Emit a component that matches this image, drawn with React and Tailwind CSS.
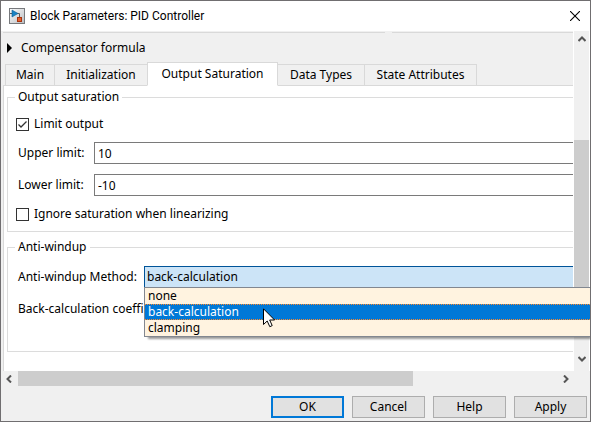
import React from "react";

const tabs = [
  { label: "Main", width: "w-[50px]" },
  { label: "Initialization", width: "w-[92px]" },
  { label: "Output Saturation", width: "w-[131px]", active: true },
  { label: "Data Types", width: "w-[87px]" },
  { label: "State Attributes", width: "w-[112px]" },
];

const methods = ["none", "back-calculation", "clamping"];

function AppIcon() {
  return (
    <svg width="16" height="16" viewBox="0 0 16 16" className="shrink-0" aria-hidden="true">
      <defs>
        <linearGradient id="face" x1="0" y1="0" x2="1" y2="1">
          <stop offset="0" stopColor="#ffffff" />
          <stop offset="1" stopColor="#b9bcc0" />
        </linearGradient>
      </defs>
      <rect x="0.5" y="0.5" width="15" height="15" fill="url(#face)" stroke="#77797c" />
      <path d="M1 5.5H3M8 5.5H10.5V9" fill="none" stroke="#5c5c5c" />
      <path d="M3 2L9 5.5L3 9Z" fill="#1a83c4" stroke="#0f5f96" strokeWidth="0.6" />
      <rect x="8.5" y="9.5" width="4" height="4" fill="#e8602c" stroke="#a8330d" />
    </svg>
  );
}

function Chevron({ d, label }) {
  return (
    <button type="button" aria-label={label} className="flex size-4 shrink-0 items-center justify-center">
      <svg width="8" height="8" viewBox="0 0 8 8" fill="none" stroke="#555555" strokeWidth="2">
        <path d={d} />
      </svg>
    </button>
  );
}

function Check({ id, label, checked }) {
  return (
    <div className="flex h-5 items-center gap-[5px] pl-2">
      <span className="grid size-[13px] shrink-0">
        <input
          id={id}
          type="checkbox"
          defaultChecked={checked}
          className="peer col-start-1 row-start-1 size-[13px] appearance-none border border-[#333333] bg-white"
        />
        <svg
          viewBox="0 0 13 13"
          className="pointer-events-none col-start-1 row-start-1 size-[13px] opacity-0 peer-checked:opacity-100"
          fill="none"
          stroke="#333333"
          strokeWidth="1.3"
        >
          <path d="M2.5 6.5L5 9L10.5 3.5" />
        </svg>
      </span>
      <label htmlFor={id}>{label}</label>
    </div>
  );
}

function Field({ id, label, value }) {
  return (
    <div className="flex h-[22px] items-center pl-[10px]">
      <label htmlFor={id} className="w-[76px] shrink-0">{label}</label>
      <input
        id={id}
        defaultValue={value}
        className="h-[22px] min-w-0 flex-1 border border-r-0 border-[#7a7a7a] bg-white px-[3px]"
      />
    </div>
  );
}

function DialogButton({ children, primary }) {
  return (
    <button
      type="button"
      className={
        primary
          ? "h-[22px] w-[73px] border-2 border-[#0078d7] bg-[#e1e1e1]"
          : "h-[22px] w-[73px] border border-[#adadad] bg-[#e1e1e1]"
      }
    >
      {children}
    </button>
  );
}

export default function App() {
  return (
    <div className="flex min-h-screen flex-col overflow-hidden border border-[#706e70] bg-[#f0f0f0] font-['Noto_Sans',sans-serif] text-[12px] leading-4 text-black">
      <header className="flex h-[30px] items-center bg-white pr-[10px] pl-2">
        <AppIcon />
        <h1 className="flex-1 pl-[5px] font-[Roboto,sans-serif] text-[12px]">Block Parameters: PID Controller</h1>
        <button type="button" aria-label="Close">
          <svg width="10" height="10" viewBox="0 0 10 10" stroke="#000000" strokeWidth="1.1">
            <path d="M0 0L10 10M10 0L0 10" />
          </svg>
        </button>
      </header>

      <div className="flex">
        <main className="min-w-0 flex-1 border-r border-white pl-[2px]">
          <div className="flex h-[2px] items-end gap-[7px]">
            <div className="h-px w-[382px] bg-[#d9d9d9]" />
            <div className="h-px flex-1 bg-[#d9d9d9]" />
          </div>
          <button type="button" className="flex h-[29px] items-center gap-[9px] pl-1">
            <svg width="5" height="10" viewBox="0 0 5 10"><path d="M0 0L5 5L0 10Z" /></svg>
            Compensator formula
          </button>

          <div role="tablist" className="flex h-6 items-end border-b border-[#d9d9d9] pl-[2px]">
            {tabs.map((t, i) => (
              <button
                key={t.label}
                type="button"
                role="tab"
                aria-selected={Boolean(t.active)}
                className={
                  (t.active
                    ? "relative -mb-px h-6 border bg-white "
                    : "h-[21px] border-t border-r bg-[#f0f0f0] ") +
                  (i === 0 ? "border-l " : i === 1 ? "border-r-0 " : "") +
                  "shrink-0 whitespace-nowrap border-[#d9d9d9] border-b-white " +
                  t.width
                }
              >
                {t.label}
              </button>
            ))}
          </div>

          <div className="h-[285px] border-l border-[#d9d9d9] bg-white pt-[3px] pl-[3px]">
            <fieldset className="border border-r-0 border-[#dcdcdc] pb-[7px]">
              <legend className="ml-[7px] px-[3px]">Output saturation</legend>
              <div className="flex flex-col pt-[9px]">
                <Check id="limit" label="Limit output" checked />
                <div className="flex flex-col gap-[10px] pt-2 pb-2">
                  <Field id="upper" label="Upper limit:" value="10" />
                  <Field id="lower" label="Lower limit:" value="-10" />
                </div>
                <Check id="ignore" label="Ignore saturation when linearizing" />
              </div>
            </fieldset>

            <fieldset className="mt-[7px] min-w-0 border border-r-0 border-[#dcdcdc]">
              <legend className="ml-[7px] px-[3px]">Anti-windup</legend>
              <div className="flex flex-col gap-[10px] pt-[11px] pb-[31px]">
                <div className="relative flex h-[22px] items-center pl-[10px]">
                  <label htmlFor="method" className="w-[126px] shrink-0 whitespace-nowrap">Anti-windup Method:</label>
                  <select
                    id="method"
                    defaultValue="back-calculation"
                    className="h-[22px] min-w-0 flex-1 appearance-none border border-r-0 border-[#005499] bg-[#cce4f7] px-[2px]"
                  >
                    {methods.map((m) => (
                      <option key={m}>{m}</option>
                    ))}
                  </select>
                  <ul
                    role="listbox"
                    aria-label="Anti-windup Method"
                    className="absolute top-[21px] -right-5 left-[136px] z-10 border border-[#828790] bg-[#fff3e0] shadow-[4px_2px_2px_rgba(0,0,0,0.4)]"
                  >
                    {methods.map((m) => (
                      <li
                        key={m}
                        role="option"
                        aria-selected={m === "back-calculation"}
                        className={
                          m === "back-calculation"
                            ? "h-4 border-y border-dotted border-[#ff8728] bg-[#0078d7] pl-[3px] leading-[14px] text-white"
                            : "h-4 pl-[3px]"
                        }
                      >
                        {m}
                      </li>
                    ))}
                  </ul>
                  <svg className="absolute top-[42px] left-[255px] z-20" width="13" height="20" viewBox="0 0 13 20" aria-hidden="true">
                    <path d="M0.5 0.8V16.5L4.2 13L6.8 18.7L9.2 17.6L6.7 12H11.6Z" fill="#ffffff" stroke="#000000" strokeWidth="1" />
                  </svg>
                </div>
                <div className="flex h-[22px] items-center pl-[10px] whitespace-nowrap">
                  Back-calculation coeffi
                </div>
              </div>
            </fieldset>
          </div>
        </main>

        <div className="flex w-4 shrink-0 flex-col border-r border-white">
          <Chevron label="Scroll up" d="M0.5 6L4 2.5L7.5 6" />
          <div className="mt-[93px] h-[180px] bg-[#cdcdcd]" />
          <div className="mt-auto pb-1">
            <Chevron label="Scroll down" d="M0.5 2L4 5.5L7.5 2" />
          </div>
        </div>
      </div>

      <div className="flex h-[15px] items-center pr-4">
        <Chevron label="Scroll left" d="M6 0.5L2.5 4L6 7.5" />
        <div className="flex flex-1">
          <div className="ml-px h-[15px] w-[73%] bg-[#cdcdcd]" />
        </div>
        <Chevron label="Scroll right" d="M2 0.5L5.5 4L2 7.5" />
      </div>

      <footer className="flex justify-end gap-2 pt-[10px] pr-[3px] pb-[3px]">
        <DialogButton primary>OK</DialogButton>
        <DialogButton>Cancel</DialogButton>
        <DialogButton>Help</DialogButton>
        <DialogButton>Apply</DialogButton>
      </footer>
    </div>
  );
}
